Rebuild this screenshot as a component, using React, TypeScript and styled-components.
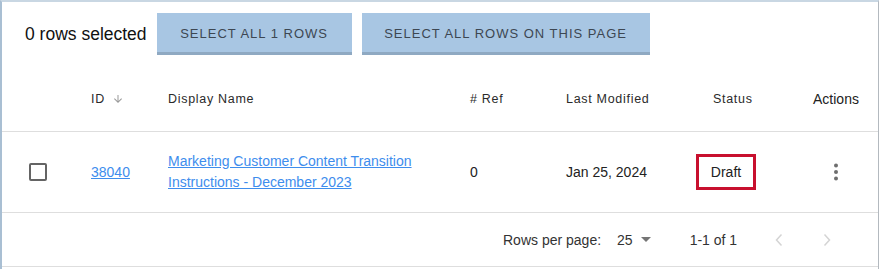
import React from "react";
import styled, { createGlobalStyle } from "styled-components";

const Global = createGlobalStyle`
  html, body { margin: 0; padding: 0; background: #ffffff; }
  body { font-family: "Liberation Sans", Arial, sans-serif; color: #222; }
`;

const COLS = "73px 77px 302px 96px 130px 114px 1fr";

const Panel = styled.div`
  width: 879px;
  height: 269px;
  box-sizing: border-box;
  border-left: 2px solid #a9bfd3;
  border-top: 2px solid #c9d7e3;
  border-right: 1px solid #b3b9bf;
  background: #fff;
`;

const Toolbar = styled.div`
  display: flex;
  align-items: flex-start;
  gap: 10px;
  padding: 11px 0 0 23px;
  height: 45px;
`;

const SelectedLabel = styled.div`
  font-size: 17.5px;
  line-height: 42px;
  color: #111;
`;

const BulkButton = styled.button<{ $w: number }>`
  width: ${(p) => p.$w}px;
  height: 42px;
  border: none;
  border-radius: 0;
  background: #a8c6e3;
  box-shadow: inset 0 -3px 0 #8fa9c2;
  font-family: "Liberation Sans", Arial, sans-serif;
  font-size: 13px;
  letter-spacing: 1px;
  color: #3d4752;
  text-transform: uppercase;
  padding: 0 0 2px;
  cursor: pointer;
`;

const Row = styled.div<{ $h: number; $border?: boolean }>`
  display: grid;
  grid-template-columns: ${COLS};
  align-items: center;
  height: ${(p) => p.$h}px;
  box-sizing: border-box;
  border-bottom: ${(p) => (p.$border ? "1px solid #dedede" : "none")};
`;

const HeadRow = styled(Row)`
  align-items: start;
  padding-top: 34px;
`;

const HeadCell = styled.div<{ $pl?: number }>`
  padding-left: ${(p) => p.$pl ?? 16}px;
  font-size: 12.5px;
  letter-spacing: 0.7px;
  color: #2a2a2a;
  display: flex;
  align-items: center;
  gap: 7px;
`;

const ActionsHead = styled.div`
  text-align: center;
  font-size: 14px;
  color: #222;
  margin-top: -1px;
`;

const Cell = styled.div<{ $pl?: number; $center?: boolean }>`
  padding-left: ${(p) => p.$pl ?? 16}px;
  display: flex;
  justify-content: ${(p) => (p.$center ? "center" : "flex-start")};
  font-size: 14px;
  line-height: 21px;
  color: #222;
`;

const Checkbox = styled.span`
  width: 14px;
  height: 14px;
  border: 2px solid #646464;
  border-radius: 2px;
  display: block;
  margin-left: 27px;
`;

const Link = styled.a`
  color: #3e8ded;
  text-decoration: underline;
  font-size: 14px;
  line-height: 21px;
  cursor: pointer;
`;

const StatusBadge = styled.span`
  display: inline-block;
  border: 3px solid #c8102e;
  width: 54px;
  height: 30px;
  box-sizing: content-box;
  text-align: center;
  line-height: 30px;
  font-size: 14px;
  color: #222;
`;

const Footer = styled.div`
  display: flex;
  align-items: center;
  height: 53px;
  border-bottom: 1px solid #dedede;
  padding-left: 501px;
  font-size: 14px;
  color: #333;
`;

const PerPage = styled.span`
  margin-right: 16px;
`;

const Select = styled.span`
  display: flex;
  align-items: center;
  gap: 8px;
  margin-right: 39px;
`;

const Range = styled.span`
  margin-right: 30px;
`;

const PageButton = styled.span`
  width: 24px;
  height: 24px;
  display: flex;
  align-items: center;
  justify-content: center;
  margin-right: 24px;
`;

const Caret = () => (
  <svg width="10" height="5" viewBox="0 0 10 5">
    <path d="M0 0 L10 0 L5 5 Z" fill="#757575" />
  </svg>
);

const SortArrow = () => (
  <svg width="12" height="12" viewBox="0 0 24 24">
    <path d="M20 12l-1.41-1.41L13 16.17V4h-2v12.17l-5.58-5.59L4 12l8 8 8-8z" fill="#999" />
  </svg>
);

const Kebab = () => (
  <svg width="6" height="18" viewBox="0 0 6 18">
    <circle cx="3" cy="2.5" r="2" fill="#6e6e6e" />
    <circle cx="3" cy="9" r="2" fill="#6e6e6e" />
    <circle cx="3" cy="15.5" r="2" fill="#6e6e6e" />
  </svg>
);

const Chevron = ({ dir }: { dir: "left" | "right" }) => (
  <svg width="10" height="14" viewBox="0 0 10 14">
    <path
      d={dir === "left" ? "M7.5 1.5 L2.5 7 L7.5 12.5" : "M2.5 1.5 L7.5 7 L2.5 12.5"}
      stroke="#d4d4d4"
      strokeWidth="1.5"
      fill="none"
    />
  </svg>
);

export default function App() {
  return (
    <>
      <Global />
      <Panel>
        <Toolbar>
          <SelectedLabel>0 rows selected</SelectedLabel>
          <BulkButton $w={195}>Select all 1 rows</BulkButton>
          <BulkButton $w={288}>Select all rows on this page</BulkButton>
        </Toolbar>
        <HeadRow $h={74} $border>
          <div />
          <HeadCell>
            ID <SortArrow />
          </HeadCell>
          <HeadCell>Display Name</HeadCell>
          <HeadCell>#&nbsp;Ref</HeadCell>
          <HeadCell>Last Modified</HeadCell>
          <HeadCell $pl={33}>Status</HeadCell>
          <ActionsHead>Actions</ActionsHead>
        </HeadRow>
        <Row $h={81} $border>
          <Cell $pl={0}>
            <Checkbox />
          </Cell>
          <Cell>
            <Link>38040</Link>
          </Cell>
          <Cell>
            <Link>
              Marketing Customer Content Transition
              <br />
              Instructions - December 2023
            </Link>
          </Cell>
          <Cell>0</Cell>
          <Cell>Jan 25, 2024</Cell>
          <Cell>
            <StatusBadge>Draft</StatusBadge>
          </Cell>
          <Cell $pl={0} $center>
            <Kebab />
          </Cell>
        </Row>
        <Footer>
          <PerPage>Rows per page:</PerPage>
          <Select>
            25 <Caret />
          </Select>
          <Range>1-1 of 1</Range>
          <PageButton>
            <Chevron dir="left" />
          </PageButton>
          <PageButton>
            <Chevron dir="right" />
          </PageButton>
        </Footer>
      </Panel>
    </>
  );
}
